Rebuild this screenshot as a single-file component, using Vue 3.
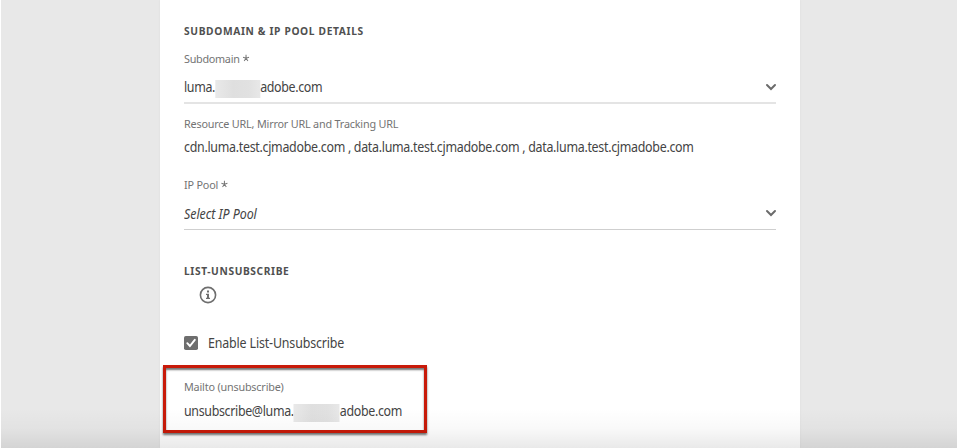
<script setup>
const urls = ['cdn.luma.test.cjmadobe.com', 'data.luma.test.cjmadobe.com', 'data.luma.test.cjmadobe.com']
</script>

<template>
  <div class="page">
    <main class="panel">
      <h2 class="heading">SUBDOMAIN &amp; IP POOL DETAILS</h2>

      <div class="label first"><span class="wide">Subdomain</span>
        <svg class="star" viewBox="0 0 8 8"><path d="M4 .8V4.2M.8 3.2 4 4.2M7.2 3.2 4 4.2M2 7 4 4.2M6 7 4 4.2" /></svg>
      </div>
      <div class="select">
        <span class="value host">luma.<i class="redacted"></i>adobe.com</span>
        <svg class="chevron" viewBox="0 0 12 8"><path d="M2 2 6 6 10 2" /></svg>
      </div>

      <div class="label resource"><span>Resource URL, Mirror URL and Tracking URL</span></div>
      <div class="value urls">{{ urls.join(' , ') }}</div>

      <div class="label pool"><span>IP Pool</span>
        <svg class="star" viewBox="0 0 8 8"><path d="M4 .8V4.2M.8 3.2 4 4.2M7.2 3.2 4 4.2M2 7 4 4.2M6 7 4 4.2" /></svg>
      </div>
      <div class="select thin">
        <span class="value placeholder">Select IP Pool</span>
        <svg class="chevron" viewBox="0 0 12 8"><path d="M2 2 6 6 10 2" /></svg>
      </div>

      <h2 class="heading list">LIST-UNSUBSCRIBE</h2>
      <svg class="info" viewBox="0 0 18 18">
        <circle cx="9" cy="9" r="7.6" />
        <path class="solid" d="M8 4.6h2v2H8zM7 7.8h3v4h1v1.3H7v-1.3h1V9.1H7z" />
      </svg>

      <div class="check">
        <svg class="box" viewBox="0 0 14 14"><rect width="14" height="14" rx="1.8" /><path d="M3.3 7.2 5.9 10 10.8 3.8" /></svg>
        <span class="value enable">Enable List-Unsubscribe</span>
      </div>

      <section class="mailto">
        <div class="label"><span>Mailto (unsubscribe)</span></div>
        <div class="value mail">unsubscribe@luma.<i class="redacted"></i>adobe.com</div>
      </section>
    </main>
    <div class="fade"></div>
  </div>
</template>

<style>
body { margin: 0; overflow: hidden; }
</style>

<style scoped>
.page {
  position: relative;
  box-sizing: border-box;
  width: 957px;
  height: 448px;
  overflow: hidden;
  padding-left: 160px;
  border-left: 1px solid #fff;
  background: #e8e8e8;
  font-family: "Noto Sans", "Open Sans", sans-serif;
}
.panel {
  box-sizing: border-box;
  width: 640px;
  height: 448px;
  margin-left: -1px;
  padding: 21px 24px 0;
  background: #fff;
  box-shadow: 0 0 2px rgba(0, 0, 0, .06);
}
.heading {
  margin: 0;
  height: 20px;
  font-size: 11px;
  line-height: 20px;
  font-weight: 700;
  letter-spacing: .69px;
  color: #505050;
  white-space: nowrap;
  transform: scaleX(.93);
  transform-origin: 0 50%;
}
.label {
  display: flex;
  align-items: center;
  height: 16px;
  font-size: 11.5px;
  line-height: 16px;
  letter-spacing: -.2px;
  color: #737373;
  white-space: nowrap;
  transform: scaleX(.94);
  transform-origin: 0 50%;
}
.wide { letter-spacing: -.3px; }
.first { margin-top: 10px; }
.star {
  width: 8px;
  height: 8px;
  margin: 0 0 2px 3px;
  fill: none;
  stroke: #777;
  stroke-width: 1.1;
}
.value {
  display: flex;
  align-items: center;
  height: 20px;
  font-size: 13.5px;
  line-height: 20px;
  letter-spacing: -.34px;
  color: #444;
  white-space: pre;
  transform: scaleX(.92);
  transform-origin: 0 50%;
}
.select {
  display: flex;
  align-items: center;
  justify-content: space-between;
  box-sizing: border-box;
  width: 592px;
  height: 37px;
  padding-top: 4px;
  border-bottom: 2px solid #e4e4e4;
}
.select.thin { height: 37px; border-bottom: 1px solid #cfcfcf; }
.chevron {
  width: 12px;
  height: 8px;
  margin-right: -1px;
  fill: none;
  stroke: #6b6b6b;
  stroke-width: 2;
  stroke-linecap: round;
}
.redacted {
  width: 49px;
  height: 18px;
  margin-top: 4px;
  background: linear-gradient(90deg, #e9e9e9, #dfdfdf 40%, #e1e1e1 75%, #e8e8e8);
}
.host { margin-top: 1px; letter-spacing: -.37px; }
.resource { margin-top: 12px; }
.urls { margin-top: 5px; letter-spacing: -.32px; }
.pool { margin-top: 20px; }
.placeholder { margin-top: 1px; font-style: italic; letter-spacing: -.05px; }
.enable { letter-spacing: -.17px; }
.list { margin-top: 31px; letter-spacing: .65px; }
.info {
  display: block;
  width: 18px;
  height: 18px;
  margin: 5px 0 0 15px;
  fill: none;
  stroke: #6e6e6e;
  stroke-width: 1.6;
}
.solid { fill: #6e6e6e; stroke: none; }
.check {
  display: flex;
  align-items: center;
  gap: 10px;
  height: 20px;
  margin-top: 29px;
}
.box { width: 14px; height: 14px; }
.box rect { fill: #6e6e6e; }
.box path { fill: none; stroke: #fff; stroke-width: 1.9; stroke-linecap: round; }
.mailto {
  box-sizing: border-box;
  width: 264px;
  height: 68px;
  margin: 12px 0 0 -21px;
  padding: 11px 0 0 18px;
  border: 3px solid #c81a09;
  box-shadow: 0 2px 2px rgba(0, 0, 0, .55), inset 0 2px 2px rgba(0, 0, 0, .55);
}
.mail { margin-top: 6px; letter-spacing: -.36px; }
.mail .redacted { width: 50px; }
.fade {
  position: absolute;
  inset: auto 0 0;
  height: 40px;
  pointer-events: none;
  background: linear-gradient(transparent, rgba(0, 0, 0, .025) 50%, rgba(0, 0, 0, .085));
}
</style>
